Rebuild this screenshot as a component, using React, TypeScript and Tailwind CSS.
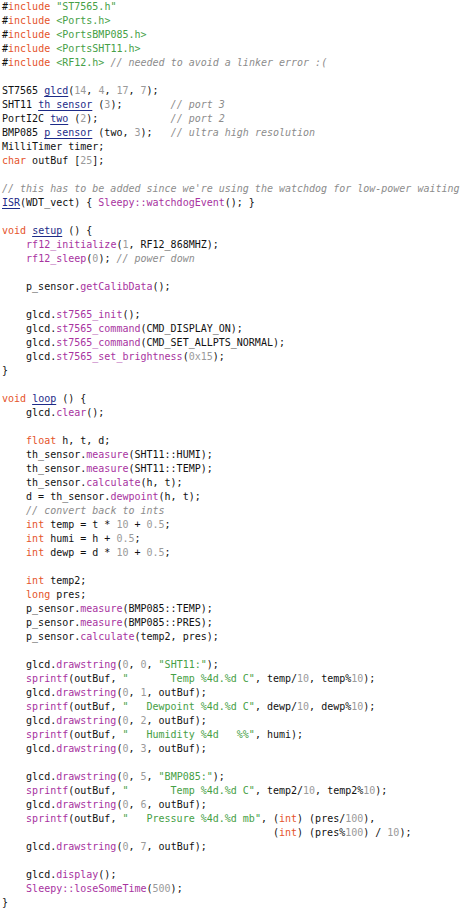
import React from "react";

const K = "text-[#e5532a]";
const S = "text-[#46a046]";
const N = "text-[#9a9a9a]";
const C = "text-[#8c8c8c] italic";
const F = "text-[#a8339f]";
const U = "text-[#1d2b88] underline decoration-[#1d2b88] underline-offset-[2px]";
const T = "";

type Seg = [string, string];

const lines: Seg[][] = [
  [[T, "#"], [K, "include"], [T, " "], [S, "\"ST7565.h\""]],
  [[T, "#"], [K, "include"], [T, " "], [S, "<Ports.h>"]],
  [[T, "#"], [K, "include"], [T, " "], [S, "<PortsBMP085.h>"]],
  [[T, "#"], [K, "include"], [T, " "], [S, "<PortsSHT11.h>"]],
  [[T, "#"], [K, "include"], [T, " "], [S, "<RF12.h>"], [T, " "], [C, "// needed to avoid a linker error :("]],
  [],
  [[T, "ST7565 "], [U, "glcd"], [T, "("], [N, "14"], [T, ", "], [N, "4"], [T, ", "], [N, "17"], [T, ", "], [N, "7"], [T, ");"]],
  [[T, "SHT11 "], [U, "th_sensor"], [T, " ("], [N, "3"], [T, ");        "], [C, "// port 3"]],
  [[T, "PortI2C "], [U, "two"], [T, " ("], [N, "2"], [T, ");            "], [C, "// port 2"]],
  [[T, "BMP085 "], [U, "p_sensor"], [T, " (two, "], [N, "3"], [T, ");   "], [C, "// ultra high resolution"]],
  [[T, "MilliTimer timer;"]],
  [[K, "char"], [T, " outBuf ["], [N, "25"], [T, "];"]],
  [],
  [[C, "// this has to be added since we're using the watchdog for low-power waiting"]],
  [[U, "ISR"], [T, "(WDT_vect) { "], [F, "Sleepy::watchdogEvent"], [T, "(); }"]],
  [],
  [[K, "void"], [T, " "], [U, "setup"], [T, " () {"]],
  [[T, "    "], [F, "rf12_initialize"], [T, "("], [N, "1"], [T, ", RF12_868MHZ);"]],
  [[T, "    "], [F, "rf12_sleep"], [T, "("], [N, "0"], [T, "); "], [C, "// power down"]],
  [],
  [[T, "    p_sensor."], [F, "getCalibData"], [T, "();"]],
  [],
  [[T, "    glcd."], [F, "st7565_init"], [T, "();"]],
  [[T, "    glcd."], [F, "st7565_command"], [T, "(CMD_DISPLAY_ON);"]],
  [[T, "    glcd."], [F, "st7565_command"], [T, "(CMD_SET_ALLPTS_NORMAL);"]],
  [[T, "    glcd."], [F, "st7565_set_brightness"], [T, "("], [N, "0x15"], [T, ");"]],
  [[T, "}"]],
  [],
  [[K, "void"], [T, " "], [U, "loop"], [T, " () {"]],
  [[T, "    glcd."], [F, "clear"], [T, "();"]],
  [],
  [[T, "    "], [K, "float"], [T, " h, t, d;"]],
  [[T, "    th_sensor."], [F, "measure"], [T, "(SHT11::HUMI);"]],
  [[T, "    th_sensor."], [F, "measure"], [T, "(SHT11::TEMP);"]],
  [[T, "    th_sensor."], [F, "calculate"], [T, "(h, t);"]],
  [[T, "    d = th_sensor."], [F, "dewpoint"], [T, "(h, t);"]],
  [[T, "    "], [C, "// convert back to ints"]],
  [[T, "    "], [K, "int"], [T, " temp = t * "], [N, "10"], [T, " + "], [N, "0.5"], [T, ";"]],
  [[T, "    "], [K, "int"], [T, " humi = h + "], [N, "0.5"], [T, ";"]],
  [[T, "    "], [K, "int"], [T, " dewp = d * "], [N, "10"], [T, " + "], [N, "0.5"], [T, ";"]],
  [],
  [[T, "    "], [K, "int"], [T, " temp2;"]],
  [[T, "    "], [K, "long"], [T, " pres;"]],
  [[T, "    p_sensor."], [F, "measure"], [T, "(BMP085::TEMP);"]],
  [[T, "    p_sensor."], [F, "measure"], [T, "(BMP085::PRES);"]],
  [[T, "    p_sensor."], [F, "calculate"], [T, "(temp2, pres);"]],
  [],
  [[T, "    glcd."], [F, "drawstring"], [T, "("], [N, "0"], [T, ", "], [N, "0"], [T, ", "], [S, "\"SHT11:\""], [T, ");"]],
  [[T, "    "], [F, "sprintf"], [T, "(outBuf, "], [S, "\"       Temp %4d.%d C\""], [T, ", temp/"], [N, "10"], [T, ", temp%"], [N, "10"], [T, ");"]],
  [[T, "    glcd."], [F, "drawstring"], [T, "("], [N, "0"], [T, ", "], [N, "1"], [T, ", outBuf);"]],
  [[T, "    "], [F, "sprintf"], [T, "(outBuf, "], [S, "\"   Dewpoint %4d.%d C\""], [T, ", dewp/"], [N, "10"], [T, ", dewp%"], [N, "10"], [T, ");"]],
  [[T, "    glcd."], [F, "drawstring"], [T, "("], [N, "0"], [T, ", "], [N, "2"], [T, ", outBuf);"]],
  [[T, "    "], [F, "sprintf"], [T, "(outBuf, "], [S, "\"   Humidity %4d   %%\""], [T, ", humi);"]],
  [[T, "    glcd."], [F, "drawstring"], [T, "("], [N, "0"], [T, ", "], [N, "3"], [T, ", outBuf);"]],
  [],
  [[T, "    glcd."], [F, "drawstring"], [T, "("], [N, "0"], [T, ", "], [N, "5"], [T, ", "], [S, "\"BMP085:\""], [T, ");"]],
  [[T, "    "], [F, "sprintf"], [T, "(outBuf, "], [S, "\"       Temp %4d.%d C\""], [T, ", temp2/"], [N, "10"], [T, ", temp2%"], [N, "10"], [T, ");"]],
  [[T, "    glcd."], [F, "drawstring"], [T, "("], [N, "0"], [T, ", "], [N, "6"], [T, ", outBuf);"]],
  [[T, "    "], [F, "sprintf"], [T, "(outBuf, "], [S, "\"   Pressure %4d.%d mb\""], [T, ", ("], [K, "int"], [T, ") (pres/"], [N, "100"], [T, "),"]],
  [[T, "                                             ("], [K, "int"], [T, ") (pres%"], [N, "100"], [T, ") / "], [N, "10"], [T, ");"]],
  [[T, "    glcd."], [F, "drawstring"], [T, "("], [N, "0"], [T, ", "], [N, "7"], [T, ", outBuf);"]],
  [],
  [[T, "    glcd."], [F, "display"], [T, "();"]],
  [[T, "    "], [F, "Sleepy::loseSomeTime"], [T, "("], [N, "500"], [T, ");"]],
  [[T, "}"]],
];

export default function App() {
  return (
    <div className="w-[467px] h-[912px] bg-white overflow-hidden">
      <pre
        className="pl-[2px] text-[10px] leading-[14px] text-[#111111] whitespace-pre"
        style={{ fontFamily: '"DejaVu Sans Mono", "Liberation Mono", monospace' }}
      >
        {lines.map((segs, i) => (
          <div key={i} className="h-[14px]">
            {segs.length === 0 ? " " : segs.map((s, j) => (
              <span key={j} className={s[0]}>{s[1]}</span>
            ))}
          </div>
        ))}
      </pre>
    </div>
  );
}
